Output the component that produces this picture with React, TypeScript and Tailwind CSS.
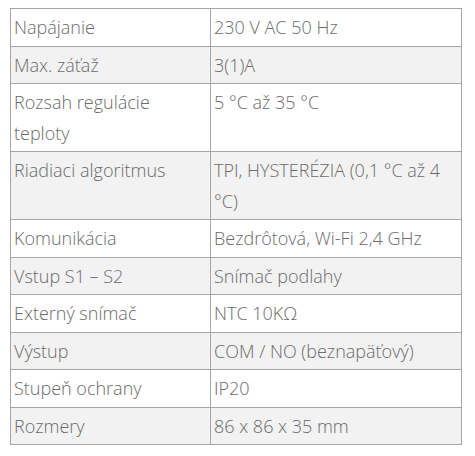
const specs: [string, string][] = [
  ['Napájanie', '230 V AC 50 Hz'],
  ['Max. záťaž', '3(1)A'],
  ['Rozsah regulácie teploty', '5 °C až 35 °C'],
  ['Riadiaci algoritmus', 'TPI, HYSTERÉZIA (0,1 °C až 4 °C)'],
  ['Komunikácia', 'Bezdrôtová, Wi-Fi 2,4 GHz'],
  ['Vstup S1 – S2', 'Snímač podlahy'],
  ['Externý snímač', 'NTC 10KΩ'],
  ['Výstup', 'COM / NO (beznapäťový)'],
  ['Stupeň ochrany', 'IP20'],
  ['Rozmery', '86 x 86 x 35 mm'],
]

export default function App() {
  return (
    <div className="bg-white w-[475px] h-[456px] pt-2 pl-[10px] font-['Open_Sans',sans-serif] text-[18px] font-light text-[#6b6b6b]">
      <table className="w-[451px] border-collapse table-fixed">
        <colgroup>
          <col className="w-[200px]" />
          <col className="w-[251px]" />
        </colgroup>
        <tbody>
          {specs.map(([label, value], i) => (
            <tr key={label} className={i % 2 === 1 ? 'bg-[#f2f2f2]' : 'bg-white'}>
              <td className="border border-[#a6a6a6] px-[3px] py-[3px] leading-[30.5px] align-top">{label}</td>
              <td className="border border-[#a6a6a6] px-[3px] py-[3px] leading-[30.5px] align-top">{value}</td>
            </tr>
          ))}
        </tbody>
      </table>
    </div>
  )
}
